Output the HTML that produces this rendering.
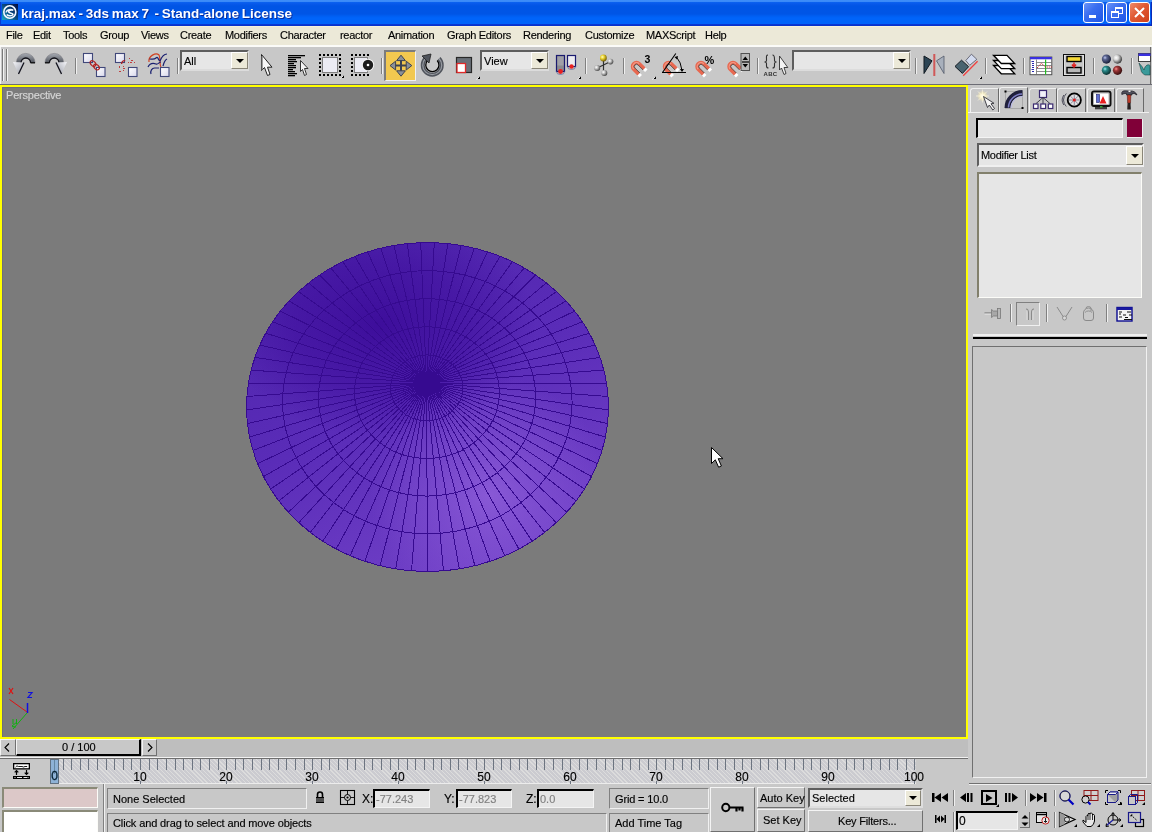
<!DOCTYPE html>
<html><head><meta charset="utf-8">
<style>
*{margin:0;padding:0;box-sizing:border-box}
html,body{width:1152px;height:832px;overflow:hidden;background:#c8c8c8;font-family:"Liberation Sans",sans-serif;font-size:11px;color:#000;position:relative}
.a{position:absolute}
.tx{position:absolute;white-space:pre;line-height:12px;font-size:11px;will-change:transform;-webkit-text-stroke:0.15px currentColor}
.sep{position:absolute;width:2px;border-left:1px solid #808080;border-right:1px solid #f0f0f0}
.sunk{position:absolute;border-top:1px solid #808080;border-left:1px solid #808080;border-bottom:1px solid #f0f0f0;border-right:1px solid #f0f0f0}
.rais{position:absolute;border-top:1px solid #f4f4f4;border-left:1px solid #f4f4f4;border-bottom:1px solid #707070;border-right:1px solid #707070}
.fld{position:absolute;background:#e6e6e6;border-top:2px solid #000;border-left:2px solid #000;border-bottom:1px solid #f4f4f4;border-right:1px solid #f4f4f4}
.dd{position:absolute;background:#e6e6e6;border-top:2px solid #5e5e5e;border-left:2px solid #5e5e5e;border-bottom:2px solid #dcdcdc;border-right:2px solid #dcdcdc}
.ddb{position:absolute;background:#ece9d8;border-top:1px solid #fff;border-left:1px solid #fff;border-bottom:1px solid #8a8678;border-right:1px solid #8a8678}
.ddb i{position:absolute;left:50%;top:50%;margin-left:-4px;margin-top:-2px;width:0;height:0;border-left:4px solid transparent;border-right:4px solid transparent;border-top:4px solid #000}
.fly{position:absolute;width:0;height:0;border-left:3px solid transparent;border-bottom:3px solid #000}
svg{position:absolute;overflow:visible}
</style></head><body>
<!-- TITLE -->
<div class="a" style="left:0;top:0;width:1152px;height:26px;background:linear-gradient(#3d8ef8 0px,#3a8af8 1.5px,#0b63f0 2px,#0758ea 4px,#0055e5 6px,#0055e6 14px,#005ef2 16px,#0064fa 18px,#0064fa 23.5px,#0a3ad8 24px,#0630c8 26px)"></div>
<div class="a" style="left:0;top:2px;width:1px;height:24px;background:#0a3ad0"></div>
<div class="a" style="left:1151px;top:2px;width:1px;height:24px;background:#0a2ab8"></div>
<svg style="left:2px;top:4px" width="16" height="16" viewBox="0 0 16 16">
<defs><linearGradient id="lg" x1="0" y1="1" x2="1" y2="0"><stop offset="0" stop-color="#1aa8c8"/><stop offset="0.5" stop-color="#0a4a80"/><stop offset="1" stop-color="#050a40"/></linearGradient></defs>
<rect x="0" y="0" width="16" height="16" fill="url(#lg)"/>
<ellipse cx="7.8" cy="8" rx="6" ry="6.2" fill="none" stroke="#f4f8ff" stroke-width="1.6"/>
<path d="M4.2 8.5 C4.5 5.5 9 4.8 11.2 6.2 C9 5.8 6 6.5 6.8 8.2 C7.5 9.5 11 8.8 11 10.5 C10 12.5 6 12 4.8 10.5" fill="none" stroke="#f4f8ff" stroke-width="1.5"/>
</svg>
<div class="tx" style="left:21px;top:6px;font-size:13.5px;line-height:15px;font-weight:bold;color:#fff;word-spacing:-1px;-webkit-text-stroke:0;text-shadow:1px 1px 0 #0a2a9a">kraj.max - 3ds max 7  - Stand-alone License</div>
<!-- title buttons -->
<div class="a" style="left:1083px;top:2px;width:21px;height:21px;border:1px solid #fff;border-radius:3px;background:linear-gradient(135deg,#6a94f8 0%,#3a6ef0 40%,#1e56e6 100%)"><div class="a" style="left:5px;top:12px;width:7px;height:3px;background:#fff"></div></div>
<div class="a" style="left:1106px;top:2px;width:21px;height:21px;border:1px solid #fff;border-radius:3px;background:linear-gradient(135deg,#6a94f8 0%,#3a6ef0 40%,#1e56e6 100%)"><div class="a" style="left:8px;top:4px;width:8px;height:7px;border:1px solid #fff;border-top-width:2px"></div><div class="a" style="left:4px;top:8px;width:8px;height:7px;border:1px solid #fff;border-top-width:2px;background:#3a6ef0"></div></div>
<div class="a" style="left:1129px;top:2px;width:21px;height:21px;border:1px solid #fff;border-radius:3px;background:linear-gradient(135deg,#f08a6a 0%,#e05a34 45%,#d0401a 100%)"><svg style="left:4px;top:4px" width="11" height="11"><path d="M1 1L10 10M10 1L1 10" stroke="#fff" stroke-width="2"/></svg></div>
<!-- MENU -->
<div class="a" style="left:0;top:26px;width:1152px;height:19px;background:#ece9d8;border-top:1px solid #f6f2dc"></div>
<div class="a" style="left:0;top:45px;width:1152px;height:2px;background:#fbfbf8"></div>
<div class="tx" style="left:6px;top:29px;letter-spacing:-0.3px">File</div>
<div class="tx" style="left:33px;top:29px;letter-spacing:-0.3px">Edit</div>
<div class="tx" style="left:63px;top:29px;letter-spacing:-0.3px">Tools</div>
<div class="tx" style="left:100px;top:29px;letter-spacing:-0.3px">Group</div>
<div class="tx" style="left:141px;top:29px;letter-spacing:-0.3px">Views</div>
<div class="tx" style="left:180px;top:29px;letter-spacing:-0.3px">Create</div>
<div class="tx" style="left:225px;top:29px;letter-spacing:-0.3px">Modifiers</div>
<div class="tx" style="left:280px;top:29px;letter-spacing:-0.3px">Character</div>
<div class="tx" style="left:340px;top:29px;letter-spacing:-0.3px">reactor</div>
<div class="tx" style="left:388px;top:29px;letter-spacing:-0.3px">Animation</div>
<div class="tx" style="left:447px;top:29px;letter-spacing:-0.3px">Graph Editors</div>
<div class="tx" style="left:523px;top:29px;letter-spacing:-0.3px">Rendering</div>
<div class="tx" style="left:585px;top:29px;letter-spacing:-0.3px">Customize</div>
<div class="tx" style="left:646px;top:29px;letter-spacing:-0.3px">MAXScript</div>
<div class="tx" style="left:705px;top:29px;letter-spacing:-0.3px">Help</div>
<!-- TOOLBAR -->
<div class="a" style="left:0;top:47px;width:1152px;height:37px;background:#c8c8c8"></div>
<div class="a" style="left:0;top:84px;width:1152px;height:1px;background:#6c6c74"></div>
<div class="a" style="left:0;top:47px;width:1px;height:37px;background:#f4f4f4"></div>
<div class="a" style="left:1150px;top:47px;width:1px;height:37px;background:#6c6c6c"></div>
<!-- grip -->
<div class="a" style="left:2px;top:49px;width:1px;height:32px;background:#7a7a7a"></div>
<div class="a" style="left:3px;top:49px;width:1px;height:32px;background:#f4f4f4"></div>
<div class="a" style="left:6px;top:49px;width:1px;height:32px;background:#7a7a7a"></div>
<div class="a" style="left:7px;top:49px;width:1px;height:32px;background:#f4f4f4"></div>
<!-- separators -->
<div class="sep" style="left:75px;top:58px;height:16px"></div>
<div class="sep" style="left:177px;top:58px;height:16px"></div>
<div class="sep" style="left:381px;top:58px;height:16px"></div>
<div class="sep" style="left:585px;top:58px;height:16px"></div>
<div class="sep" style="left:623px;top:58px;height:16px"></div>
<div class="sep" style="left:757px;top:58px;height:16px"></div>
<div class="sep" style="left:915px;top:58px;height:16px"></div>
<div class="sep" style="left:985px;top:58px;height:16px"></div>
<div class="sep" style="left:1023px;top:58px;height:16px"></div>
<div class="sep" style="left:1093px;top:58px;height:16px"></div>
<div class="sep" style="left:1131px;top:58px;height:16px"></div>
<!-- dropdowns -->
<div class="dd" style="left:180px;top:50px;width:69px;height:21px"><div class="tx" style="left:2px;top:3px">All</div><div class="ddb" style="left:49px;top:0px;width:17px;height:17px"><i></i></div></div>
<div class="dd" style="left:480px;top:50px;width:69px;height:21px"><div class="tx" style="left:2px;top:3px">View</div><div class="ddb" style="left:49px;top:0px;width:17px;height:17px"><i></i></div></div>
<div class="dd" style="left:792px;top:50px;width:119px;height:21px"><div class="ddb" style="left:99px;top:0px;width:17px;height:17px"><i></i></div></div>
<!-- move button active -->
<div class="a" style="left:384px;top:50px;width:32px;height:31px;background:#f2c850;border-top:2px solid #7c7c7c;border-left:2px solid #7c7c7c;border-bottom:1px solid #f0f0f0;border-right:1px solid #f0f0f0"></div>
<svg style="left:0;top:0" width="1152" height="90" viewBox="0 0 1152 90">
<defs>
<linearGradient id="gm" x1="0" y1="0" x2="0" y2="1"><stop offset="0" stop-color="#a8acb4"/><stop offset="1" stop-color="#50545c"/></linearGradient>
<linearGradient id="gl" x1="0" y1="0" x2="1" y2="1"><stop offset="0" stop-color="#f4f4f8"/><stop offset="1" stop-color="#9a9ea8"/></linearGradient>
<linearGradient id="gsq" x1="0" y1="0" x2="1" y2="1"><stop offset="0" stop-color="#ffffff"/><stop offset="1" stop-color="#d8d8ec"/></linearGradient>
<radialGradient id="sp1" cx="0.35" cy="0.35" r="0.7"><stop offset="0" stop-color="#c0c8f0"/><stop offset="0.3" stop-color="#5a6490"/><stop offset="1" stop-color="#141830"/></radialGradient>
<radialGradient id="sp2" cx="0.35" cy="0.35" r="0.7"><stop offset="0" stop-color="#ffffff"/><stop offset="0.35" stop-color="#d8d8d8"/><stop offset="1" stop-color="#303030"/></radialGradient>
<radialGradient id="sp3" cx="0.35" cy="0.35" r="0.7"><stop offset="0" stop-color="#a0f0f0"/><stop offset="0.3" stop-color="#2a8a8a"/><stop offset="1" stop-color="#0a2a2a"/></radialGradient>
<radialGradient id="sp4" cx="0.35" cy="0.35" r="0.7"><stop offset="0" stop-color="#ff9090"/><stop offset="0.3" stop-color="#a03838"/><stop offset="1" stop-color="#300a0a"/></radialGradient>
<radialGradient id="spy" cx="0.35" cy="0.35" r="0.7"><stop offset="0" stop-color="#ffffc0"/><stop offset="0.4" stop-color="#e8d030"/><stop offset="1" stop-color="#705a00"/></radialGradient>
<radialGradient id="spg" cx="0.35" cy="0.35" r="0.7"><stop offset="0" stop-color="#ffffff"/><stop offset="0.4" stop-color="#c0c0c0"/><stop offset="1" stop-color="#404040"/></radialGradient>
<g id="mag"><path d="M-3.6 6.5V0A3.6 3.6 0 0 1 3.6 0V6.5" fill="none" stroke="#e86850" stroke-width="3.2"/><path d="M-2 6.5V0A2 2 0 0 1 2 0V6.5" fill="none" stroke="#303030" stroke-width="0.6"/><path d="M-3.5 0A3.5 3.5 0 0 1 3.5 0" fill="none" stroke="#f8b0a0" stroke-width="1" opacity="0.7"/><rect x="-5.2" y="6.5" width="3.2" height="2.5" fill="#fff"/><rect x="2" y="6.5" width="3.2" height="2.5" fill="#fff"/></g>
</defs>
<!-- undo -->
<path d="M16.3 62.8A9.4 9.4 0 0 1 35.1 62.8L30.6 62.8A4.8 4.8 0 0 0 21 62.8Z" fill="url(#gm)" stroke="#707078" stroke-width="0.5"/>
<path d="M21 62.8A4.8 4.8 0 0 1 30.6 62.8" fill="none" stroke="#101018" stroke-width="1.3"/>
<path d="M30.5 62.8H35" stroke="#000" stroke-width="1.2"/>
<path d="M13 62L24 62.5L18.5 74Z" fill="url(#gl)"/>
<path d="M24 62.5L18.5 74" stroke="#10101a" stroke-width="1.3"/>
<!-- redo -->
<g transform="translate(80 0) scale(-1 1)">
<path d="M16.3 62.8A9.4 9.4 0 0 1 35.1 62.8L30.6 62.8A4.8 4.8 0 0 0 21 62.8Z" fill="url(#gm)" stroke="#707078" stroke-width="0.5"/>
<path d="M21 62.8A4.8 4.8 0 0 1 30.6 62.8" fill="none" stroke="#101018" stroke-width="1.3"/>
<path d="M30.5 62.8H35" stroke="#000" stroke-width="1.2"/>
<path d="M13 62L24 62.5L18.5 74Z" fill="url(#gl)"/>
<path d="M24 62.5L18.5 74" stroke="#10101a" stroke-width="1.3"/>
</g>
<!-- link -->
<rect x="83.5" y="53.5" width="9" height="9" fill="url(#gsq)" stroke="#40487a" stroke-width="1.1"/>
<rect x="96.5" y="67.5" width="8.5" height="9" fill="url(#gsq)" stroke="#40487a" stroke-width="1.1"/>
<ellipse cx="93" cy="63.5" rx="2.2" ry="3.3" transform="rotate(-45 93 63.5)" fill="none" stroke="#b02020" stroke-width="1.2"/>
<ellipse cx="96.5" cy="67" rx="2.2" ry="3.3" transform="rotate(-45 96.5 67)" fill="none" stroke="#b02020" stroke-width="1.2"/>
<!-- unlink -->
<rect x="115.5" y="53.5" width="9" height="9" fill="url(#gsq)" stroke="#40487a" stroke-width="1.1"/>
<rect x="128.5" y="67.5" width="8.5" height="9" fill="url(#gsq)" stroke="#40487a" stroke-width="1.1"/>
<path d="M121.5 64C122 61 124 60 125 61" fill="none" stroke="#b02020" stroke-width="1.3"/>
<g fill="#c04040"><rect x="129" y="58" width="1" height="1"/><rect x="131" y="60" width="2" height="1"/><rect x="128" y="62" width="1" height="1"/><rect x="130" y="62" width="2" height="1"/><rect x="134" y="62" width="1" height="1"/><rect x="119" y="66" width="1" height="2"/><rect x="123" y="66" width="1" height="1"/><rect x="123" y="68" width="2" height="1"/><rect x="119" y="71" width="2" height="1"/><rect x="123" y="70" width="1" height="1"/></g>
<!-- bind -->
<path d="M149 62C148 56 156 52 159 55C161 58 159 64 161 67" fill="none" stroke="#d04020" stroke-width="1.2"/>
<path d="M149.5 59C152 59 154 60 156 58C158 56 158 60 160 61M153 55" fill="none" stroke="#1a2070" stroke-width="1.2"/>
<path d="M160 61C162 56 164 54 167 54M148 67C150 63 153 63 156 64C158 65 159 62 161 62M163 66C164 62 165 60 167 59" fill="none" stroke="#1a2070" stroke-width="1.2"/>
<path d="M151 74C150 71 152 68 154.5 68H159" fill="none" stroke="#1a2070" stroke-width="1.2"/>
<rect x="160.5" y="67.5" width="8.5" height="9" fill="url(#gsq)" stroke="#40487a" stroke-width="1.1"/>
<!-- select -->
<path d="M261.5 54.5V70.5L264.5 67.5L267.5 75.5L270 74.5L267.5 67.2H272Z" fill="#f8f8f8" stroke="#202020" stroke-width="1"/>
<path d="M262 56V70" stroke="#707070" stroke-width="1.3"/>
<!-- select by name -->
<g fill="#000"><rect x="288" y="55" width="17" height="1.3"/><rect x="288" y="57" width="13" height="1.3"/><rect x="288" y="59" width="8" height="1.3"/><rect x="288" y="61" width="9" height="1.3"/><rect x="288" y="63" width="6" height="1.3"/><rect x="288" y="65" width="8" height="1.3"/><rect x="288" y="67" width="8" height="1.3"/><rect x="288" y="69" width="5" height="1.3"/><rect x="288" y="71" width="7" height="1.3"/><rect x="288" y="73" width="9" height="1.3"/><rect x="288" y="75" width="7" height="1.3"/></g>
<path d="M300.5 60.5V71.5L302.5 69.5L304.5 75.5L306.5 74.5L304.5 68.5H308Z" fill="#f4f4f4" stroke="#202020" stroke-width="0.9"/>
<!-- region select -->
<g fill="#000"><rect x="319" y="54" width="2" height="2"/><rect x="323" y="54" width="2" height="2"/><rect x="327" y="54" width="2" height="2"/><rect x="331" y="54" width="2" height="2"/><rect x="335" y="54" width="2" height="2"/><rect x="339" y="54" width="2" height="2"/>
<rect x="319" y="74" width="2" height="2"/><rect x="323" y="74" width="2" height="2"/><rect x="327" y="74" width="2" height="2"/><rect x="331" y="74" width="2" height="2"/><rect x="335" y="74" width="2" height="2"/><rect x="339" y="74" width="2" height="2"/>
<rect x="319" y="58" width="2" height="2"/><rect x="319" y="62" width="2" height="2"/><rect x="319" y="66" width="2" height="2"/><rect x="319" y="70" width="2" height="2"/>
<rect x="339" y="58" width="2" height="2"/><rect x="339" y="62" width="2" height="2"/><rect x="339" y="66" width="2" height="2"/><rect x="339" y="70" width="2" height="2"/></g>
<rect x="322.5" y="57.5" width="15" height="15" fill="#ececf4" stroke="#808080"/>
<path d="M341 78L344 75V78Z" fill="#000"/><path d="M340.5 78.5L343.5 75.5" stroke="#fff" stroke-width="0.8"/>
<!-- window/crossing -->
<g fill="#000"><rect x="351" y="54" width="2" height="2"/><rect x="355" y="54" width="2" height="2"/><rect x="359" y="54" width="2" height="2"/><rect x="363" y="54" width="2" height="2"/><rect x="367" y="54" width="2" height="2"/>
<rect x="351" y="74" width="2" height="2"/><rect x="355" y="74" width="2" height="2"/><rect x="359" y="74" width="2" height="2"/><rect x="363" y="74" width="2" height="2"/><rect x="367" y="74" width="2" height="2"/>
<rect x="351" y="58" width="2" height="2"/><rect x="351" y="62" width="2" height="2"/><rect x="351" y="66" width="2" height="2"/><rect x="351" y="70" width="2" height="2"/></g>
<rect x="354.5" y="57.5" width="13" height="15" fill="#ececf4" stroke="#808080"/>
<circle cx="368" cy="65" r="6.2" fill="#f4f4f4"/>
<circle cx="368" cy="65" r="5.2" fill="#1c1c1c"/>
<circle cx="368" cy="65" r="1.3" fill="#fff"/>
<!-- move -->
<path d="M401 60V71.5M395 65.6H407" stroke="#3c4250" stroke-width="2"/>
<path d="M401 55.2L396.6 60.6H405.4Z M401 76.2L396.6 70.8H405.4Z M390 65.6L395.6 61.2V70Z M411.8 65.6L406.2 61.2V70Z" fill="#8a9098" stroke="#3c4250" stroke-width="1"/>
<!-- rotate -->
<path d="M439 58.5A9.5 9.5 0 1 1 425.5 58.5" fill="none" stroke="#50545c" stroke-width="4"/>
<path d="M439 58.5A9.5 9.5 0 1 1 425.5 58.5" fill="none" stroke="#c8ccd0" stroke-width="1.2" opacity="0.6"/>
<path d="M437.2 60.5A6.6 6.6 0 1 1 427.5 60.5" fill="none" stroke="#000" stroke-width="1.3"/>
<path d="M431 54L422 56L429 63Z" fill="#50545c" stroke="#202020" stroke-width="0.8"/>
<!-- scale -->
<rect x="456.5" y="57.5" width="15" height="15" fill="#6a7078" stroke="#282828" stroke-width="1.2"/>
<rect x="457" y="63.5" width="8.5" height="9" fill="#fff" stroke="#e02a2a" stroke-width="1.3"/>
<path d="M477 79L480 76V79Z" fill="#000"/><path d="M476.5 79.5L479.5 76.5" stroke="#fff" stroke-width="0.8"/>
<!-- pivot -->
<rect x="556.5" y="55.5" width="8" height="16" fill="#8a8a90" stroke="#1a1a70" stroke-width="1.2"/>
<rect x="557.5" y="56.5" width="6" height="9" fill="#a0a0a8"/>
<path d="M556.5 71.5A4 3 0 0 0 564.5 71.5" fill="none" stroke="#6a70a0" stroke-width="0.8"/>
<circle cx="560.5" cy="71.5" r="2.4" fill="#e82020"/>
<rect x="567.5" y="55.5" width="8" height="11" fill="#ececf0" stroke="#1a1a70" stroke-width="1.2"/>
<path d="M567.5 66.5A4 3 0 0 0 575.5 66.5" fill="none" stroke="#6a70a0" stroke-width="0.8"/>
<circle cx="571.5" cy="66.5" r="2.2" fill="#e82020"/>
<path d="M578 79L581 76V79Z" fill="#000"/><path d="M577.5 79.5L580.5 76.5" stroke="#fff" stroke-width="0.8"/>
<!-- manipulate -->
<path d="M603.5 58V71M597 68L603.5 65L610.5 61.5" stroke="#303030" stroke-width="1.2"/>
<circle cx="603.4" cy="58" r="3.4" fill="url(#spy)"/>
<circle cx="610.5" cy="61.6" r="2.8" fill="url(#spg)"/>
<circle cx="597.2" cy="68.1" r="3" fill="url(#spg)"/>
<circle cx="604.3" cy="73" r="3" fill="url(#spg)"/>
<!-- snaps -->
<use href="#mag" transform="translate(636.5 66.5) rotate(-45) scale(1.1)"/>
<text x="644.5" y="62.8" font-family="Liberation Sans" font-weight="bold" font-size="10.5" fill="#000">3</text>
<path d="M653 79L656 76V79Z" fill="#000"/><path d="M652.5 79.5L655.5 76.5" stroke="#fff" stroke-width="0.8"/>
<use href="#mag" transform="translate(668.5 66.5) rotate(-45) scale(1.1)"/>
<path d="M662 72.5H686M662.5 72.5L675.8 53.5" stroke="#000" stroke-width="1.1"/>
<path d="M676.5 57Q681 62 682 70.5" fill="none" stroke="#000" stroke-width="1"/>
<path d="M674.5 57L678 56L677 59.5Z M680 69L684 69L682 72Z" fill="#000"/>
<use href="#mag" transform="translate(701 66.5) rotate(-45) scale(1.1)"/>
<text x="704.5" y="63.5" font-family="Liberation Sans" font-weight="bold" font-size="11" fill="#000">%</text>
<use href="#mag" transform="translate(733 66.5) rotate(-45) scale(1.1)"/>
<rect x="741" y="53.5" width="8.5" height="17" fill="#b8b8b8" stroke="#505050" stroke-width="1"/>
<path d="M742 62H749" stroke="#000" stroke-width="1.2"/>
<path d="M742.5 60L745.3 56.5L748 60Z M742.5 64L745.3 67.5L748 64Z" fill="#000"/>
<!-- named sel -->
<path d="M768 55C766 55 766.5 57 766.5 59V60.5C766.5 61.5 765.5 62 764.5 62C765.5 62 766.5 62.5 766.5 63.5V66C766.5 67.5 767 68 768.5 68" fill="none" stroke="#303030" stroke-width="1.1"/>
<path d="M772.5 55C774.5 55 774.5 57 774.5 59V60.5C774.5 61.5 775.5 62 776.5 62C775.5 62 774.5 62.5 774.5 63.5V66C774.5 67.5 774 68 772.5 68" fill="none" stroke="#303030" stroke-width="1.1"/>
<text x="763.5" y="75.8" font-family="Liberation Sans" font-weight="bold" font-size="6" fill="#303030" letter-spacing="0.3">ABC</text>
<path d="M779.5 56V70L781.5 68L784 74.5L786 73.5L784 67.5H787.8Z" fill="#f4f4f4" stroke="#303030" stroke-width="0.9"/>
<!-- mirror -->
<path d="M924 56V73.5L932 60.8Z" fill="#2c4454" stroke="#101820" stroke-width="1"/>
<rect x="933.3" y="54" width="2" height="22" fill="#d05858"/>
<path d="M944 56V73.5L936.5 60.8Z" fill="#a8b0bc" stroke="#505868" stroke-width="0.8"/>
<!-- align -->
<path d="M955 66.4L961.5 60.2L968.6 66.7L962.4 73.4Z" fill="#4a6470" stroke="#101820" stroke-width="1"/>
<path d="M965.8 60.5L971.4 54.2L976.8 59.3L969.7 65.3Z" fill="#d4dcf0" stroke="#505060" stroke-width="0.8"/>
<path d="M963.2 75.7L977.6 61.3" stroke="#f04040" stroke-width="1.3"/>
<path d="M979 79L982 76V79Z" fill="#000"/><path d="M978.5 79.5L981.5 76.5" stroke="#fff" stroke-width="0.8"/>
<!-- layers -->
<path d="M993.5 65.5H1007L1014.7 73.8H1001.3Z" fill="#fff" stroke="#000" stroke-width="1.3"/>
<path d="M993.5 60.5H1007L1014.7 68.7H1001.3Z" fill="#fff" stroke="#000" stroke-width="1.3"/>
<path d="M993.5 55.3H1007L1014.7 63.5H1001.3Z" fill="#fff" stroke="#000" stroke-width="1.3"/>
<!-- curve editor -->
<rect x="1030" y="57" width="21.8" height="17.7" fill="#fff" stroke="#505050" stroke-width="1"/>
<rect x="1030" y="57" width="21.8" height="2.3" fill="#3a30e0"/>
<path d="M1036.5 59.5V74.5M1036.5 62.5H1052M1036.5 65.5H1052M1036.5 68.5H1052M1036.5 71.5H1052" stroke="#707070" stroke-width="0.8"/>
<g fill="#2a2ab0"><rect x="1031.5" y="61" width="2.5" height="1"/><rect x="1032" y="63" width="2" height="1"/><rect x="1032" y="65" width="2" height="1"/><rect x="1032" y="67" width="2" height="1"/><rect x="1031.5" y="69" width="2.5" height="1"/><rect x="1032" y="71" width="2" height="1"/></g>
<path d="M1045.6 59.5V74.5" stroke="#20c020" stroke-width="1.2"/>
<path d="M1037 68C1039 66 1040 65 1041.5 63C1043 65 1044 66 1045.5 67H1052" fill="none" stroke="#c02020" stroke-width="0.9" stroke-dasharray="1.2 0.8"/>
<!-- schematic -->
<rect x="1063.5" y="54.5" width="21" height="21" fill="#c8c8c8" stroke="#101010" stroke-width="1"/>
<rect x="1064.5" y="55.5" width="19" height="19" fill="none" stroke="#f0f0f0" stroke-width="0.6"/>
<rect x="1067" y="56.5" width="14" height="5" fill="#f4d838" stroke="#000" stroke-width="1.4"/>
<rect x="1067" y="67.5" width="14" height="5.5" fill="#b8b8b8" stroke="#000" stroke-width="1.4"/>
<path d="M1074 62.5V67M1072 64.5L1074 67L1076 64.5" stroke="#e02020" stroke-width="1.5" fill="none"/>
<!-- material -->
<circle cx="1106.4" cy="59.1" r="4.6" fill="url(#sp1)"/>
<circle cx="1117.5" cy="59.1" r="4.6" fill="url(#sp2)"/>
<circle cx="1106.4" cy="70.3" r="4.6" fill="url(#sp3)"/>
<circle cx="1117.5" cy="70.3" r="4.6" fill="url(#sp4)"/>
<!-- render -->
<rect x="1138.5" y="53.5" width="12" height="8" fill="#fff" stroke="#404040" stroke-width="1"/>
<rect x="1138.5" y="53.5" width="12" height="2.5" fill="#3a30e0"/>
<path d="M1139 63L1142 66.5L1144 70C1145 64 1150 64 1150 66V75H1145C1143 74 1141 72 1141 70Z" fill="#3a9a9a" stroke="#0a3030" stroke-width="0.5"/>
</svg>
<!-- VIEWPORT -->
<div class="a" style="left:0;top:85px;width:968px;height:654px;background:#ffff00"></div>
<div class="a" style="left:2px;top:87px;width:964px;height:650px;background:#7b7b7b;border-top:1px solid #6e6e78;border-left:1px solid #6e6e78"></div>
<div class="tx" style="left:6px;top:89px;color:#d6d6d6;letter-spacing:-0.2px">Perspective</div>
<svg style="left:0;top:0" width="1152" height="832" viewBox="0 0 1152 832">
<defs>
<linearGradient id="dg" gradientUnits="userSpaceOnUse" x1="350" y1="250" x2="500" y2="575"><stop offset="0" stop-color="#5026ae"/><stop offset="0.45" stop-color="#5a2cb8"/><stop offset="1" stop-color="#7242c8"/></linearGradient>
<radialGradient id="dc" gradientUnits="userSpaceOnUse" cx="380" cy="325" r="125" gradientTransform="translate(380 325) scale(1.25 0.9) translate(-380 -325)"><stop offset="0" stop-color="#3c0c9a" stop-opacity="0.95"/><stop offset="0.55" stop-color="#3e0e9c" stop-opacity="0.6"/><stop offset="1" stop-color="#3e0e9c" stop-opacity="0"/></radialGradient>
<radialGradient id="dh" gradientUnits="userSpaceOnUse" cx="490" cy="495" r="120"><stop offset="0" stop-color="#8c5cd8" stop-opacity="0.9"/><stop offset="0.6" stop-color="#8454d4" stop-opacity="0.45"/><stop offset="1" stop-color="#8454d4" stop-opacity="0"/></radialGradient>
</defs>
<ellipse cx="427.5" cy="407.0" rx="181.0" ry="164.5" fill="url(#dg)"/>
<ellipse cx="427.5" cy="407.0" rx="181.0" ry="164.5" fill="url(#dc)"/>
<ellipse cx="427.5" cy="407.0" rx="181.0" ry="164.5" fill="url(#dh)"/>
<path d="M426.5 383.0L427.5 571.5M426.5 383.0L411.5 570.9M426.5 383.0L395.7 568.9M426.5 383.0L380.1 565.8M426.5 383.0L364.9 561.3M426.5 383.0L350.2 555.7M426.5 383.0L336.1 549.0M426.5 383.0L322.8 541.2M426.5 383.0L310.4 532.4M426.5 383.0L298.8 522.7M426.5 383.0L288.3 512.2M426.5 383.0L278.9 500.9M426.5 383.0L270.6 489.0M426.5 383.0L263.5 476.6M426.5 383.0L257.6 463.7M426.5 383.0L253.0 450.5M426.5 383.0L249.6 437.1M426.5 383.0L247.4 423.6M426.5 383.0L246.5 410.0M426.5 383.0L246.9 396.5M426.5 383.0L248.4 383.2M426.5 383.0L251.1 370.1M426.5 383.0L254.9 357.4M426.5 383.0L259.8 345.1M426.5 383.0L265.7 333.2M426.5 383.0L272.6 321.8M426.5 383.0L280.4 311.1M426.5 383.0L289.1 301.0M426.5 383.0L298.5 291.6M426.5 383.0L308.6 282.9M426.5 383.0L319.4 275.0M426.5 383.0L330.8 268.0M426.5 383.0L342.7 261.7M426.5 383.0L355.0 256.3M426.5 383.0L367.6 251.8M426.5 383.0L380.6 248.1M426.5 383.0L393.9 245.4M426.5 383.0L407.2 243.5M426.5 383.0L420.7 242.6M426.5 383.0L434.3 242.6M426.5 383.0L447.8 243.5M426.5 383.0L461.1 245.4M426.5 383.0L474.4 248.1M426.5 383.0L487.4 251.8M426.5 383.0L500.0 256.3M426.5 383.0L512.3 261.7M426.5 383.0L524.2 268.0M426.5 383.0L535.6 275.0M426.5 383.0L546.4 282.9M426.5 383.0L556.5 291.6M426.5 383.0L565.9 301.0M426.5 383.0L574.6 311.1M426.5 383.0L582.4 321.8M426.5 383.0L589.3 333.2M426.5 383.0L595.2 345.1M426.5 383.0L600.1 357.4M426.5 383.0L603.9 370.1M426.5 383.0L606.6 383.2M426.5 383.0L608.1 396.5M426.5 383.0L608.5 410.0M426.5 383.0L607.6 423.6M426.5 383.0L605.4 437.1M426.5 383.0L602.0 450.5M426.5 383.0L597.4 463.7M426.5 383.0L591.5 476.6M426.5 383.0L584.4 489.0M426.5 383.0L576.1 500.9M426.5 383.0L566.7 512.2M426.5 383.0L556.2 522.7M426.5 383.0L544.6 532.4M426.5 383.0L532.2 541.2M426.5 383.0L518.9 549.0M426.5 383.0L504.8 555.7M426.5 383.0L490.1 561.3M426.5 383.0L474.9 565.8M426.5 383.0L459.3 568.9M426.5 383.0L443.5 570.9" stroke="#360a90" stroke-width="1" fill="none" shape-rendering="crispEdges"/>
<ellipse cx="426.7" cy="387.8" rx="36.2" ry="32.9" stroke="#360a90" stroke-width="1" fill="none" shape-rendering="crispEdges"/>
<ellipse cx="426.9" cy="392.6" rx="72.4" ry="65.8" stroke="#360a90" stroke-width="1" fill="none" shape-rendering="crispEdges"/>
<ellipse cx="427.1" cy="397.4" rx="108.6" ry="98.7" stroke="#360a90" stroke-width="1" fill="none" shape-rendering="crispEdges"/>
<ellipse cx="427.3" cy="402.2" rx="144.8" ry="131.6" stroke="#360a90" stroke-width="1" fill="none" shape-rendering="crispEdges"/>
<ellipse cx="427.5" cy="407.0" rx="181.0" ry="164.5" stroke="#360a90" stroke-width="1" fill="none" shape-rendering="crispEdges"/>
</svg>
<!-- axis tripod -->
<svg style="left:0;top:680px" width="50" height="60" viewBox="0 0 50 60">
<path d="M9.5 19.5L27 32" stroke="#e01010" stroke-width="1"/>
<path d="M27.5 23V33" stroke="#1010e0" stroke-width="1.5"/>
<path d="M27 33L13 49" stroke="#10b010" stroke-width="1"/>
<path d="M9 8L13 14M13 8L9 14" stroke="#e01010" stroke-width="1.2"/>
<path d="M28 12.5H32L28 17.5H32" stroke="#1010e0" stroke-width="1.2" fill="none"/>
<path d="M13 39V44M16.5 39V44M12 46L17 42M12 46.5L16 47" stroke="#10b010" stroke-width="1" fill="none"/>
</svg>
<!-- cursor -->
<svg style="left:711px;top:447px" width="14" height="22" viewBox="0 0 14 22"><path d="M0.5 0.5V16.5L4.3 12.8L7.6 20.2L10.4 19L7.2 11.7H12Z" fill="#fff" stroke="#000" stroke-width="1"/></svg>
<!-- COMMAND PANEL -->
<div class="a" style="left:968px;top:112px;width:31px;height:1px;background:#f0f0f0"></div>
<div class="a" style="left:1028px;top:112px;width:121px;height:1px;background:#f0f0f0"></div>
<div class="a" style="left:970px;top:88px;width:29px;height:24px;border-top:1px solid #f0f0f0;border-left:1px solid #f0f0f0;border-right:1px solid #6a6a6a;border-top-left-radius:3px"></div>
<div class="a" style="left:999px;top:87px;width:29px;height:26px;border-top:1px solid #f0f0f0;border-left:1px solid #f0f0f0;border-right:1px solid #6a6a6a;border-top-left-radius:3px"></div>
<div class="a" style="left:1029px;top:88px;width:28px;height:24px;border-top:1px solid #f0f0f0;border-left:1px solid #f0f0f0;border-right:1px solid #6a6a6a;border-top-left-radius:3px"></div>
<div class="a" style="left:1057px;top:88px;width:29px;height:24px;border-top:1px solid #f0f0f0;border-left:1px solid #f0f0f0;border-right:1px solid #6a6a6a;border-top-left-radius:3px"></div>
<div class="a" style="left:1087px;top:88px;width:28px;height:24px;border-top:1px solid #f0f0f0;border-left:1px solid #f0f0f0;border-right:1px solid #6a6a6a;border-top-left-radius:3px"></div>
<div class="a" style="left:1116px;top:88px;width:28px;height:24px;border-top:1px solid #f0f0f0;border-left:1px solid #f0f0f0;border-right:1px solid #6a6a6a;border-top-left-radius:3px"></div>
<!-- name field & color -->
<div class="fld" style="left:976px;top:118px;width:147px;height:20px"></div>
<div class="a" style="left:1127px;top:119px;width:16px;height:19px;background:#800038;border-right:1px solid #f0f0f0;border-bottom:1px solid #f0f0f0"></div>
<!-- modifier list -->
<div class="dd" style="left:977px;top:143px;width:167px;height:24px;border-bottom-color:#f0f0f0;border-right-color:#f0f0f0"><div class="tx" style="left:2px;top:4px;letter-spacing:-0.3px">Modifier List</div><div class="ddb" style="left:147px;top:1px;width:17px;height:19px"><i></i></div></div>
<!-- stack -->
<div class="a" style="left:977px;top:172px;width:165px;height:126px;background:#e6e6e6;border-top:2px solid #82806c;border-left:2px solid #82806c;border-bottom:1px solid #fcfcf8;border-right:1px solid #fcfcf8"></div>
<!-- stack buttons -->
<div class="sep" style="left:1010px;top:304px;height:18px"></div>
<div class="sunk" style="left:1016px;top:302px;width:24px;height:24px"></div>
<div class="sep" style="left:1046px;top:304px;height:18px"></div>
<div class="sep" style="left:1106px;top:304px;height:18px"></div>
<div class="a" style="left:973px;top:334px;width:174px;height:2px;background:#f0f0f0"></div>
<div class="a" style="left:973px;top:337px;width:174px;height:2px;background:#000"></div>
<div class="a" style="left:972px;top:346px;width:175px;height:432px;border-top:1px solid #707070;border-left:1px solid #707070;border-bottom:1px solid #f0f0f0;border-right:1px solid #f0f0f0"></div>
<div class="a" style="left:969px;top:783px;width:182px;height:1px;background:#707070"></div>
<div class="a" style="left:969px;top:784px;width:182px;height:1px;background:#f0f0f0"></div>
<svg style="left:960px;top:84px" width="192" height="250" viewBox="960 84 192 250">
<defs>
<radialGradient id="star" cx="0.5" cy="0.5" r="0.5"><stop offset="0" stop-color="#ffffff"/><stop offset="0.4" stop-color="#f8f0c8"/><stop offset="1" stop-color="#f0e0a0" stop-opacity="0"/></radialGradient>
<linearGradient id="tube" x1="0" y1="1" x2="1" y2="0"><stop offset="0" stop-color="#20203a"/><stop offset="0.5" stop-color="#7070b0"/><stop offset="1" stop-color="#303050"/></linearGradient>
</defs>
<!-- create -->
<circle cx="982.4" cy="96" r="5.5" fill="url(#star)"/>
<path d="M982.4 89.5V102.5M976 96H989M978 91.5L987 100.5M987 91.5L978 100.5" stroke="#fffae0" stroke-width="0.8" opacity="0.8"/>
<path d="M983.5 96.5L987.5 107.5L989.3 105L992.8 110L994.5 108.5L991 103.8L994 103.3Z" fill="#f4f4f4" stroke="#303038" stroke-width="0.9"/>
<!-- modify -->
<path d="M1005.5 91.5V108.5H1022.5M1005.5 91.5H1022.5V108.5" fill="none" stroke="#606060" stroke-width="0.6" stroke-dasharray="1 1"/>
<rect x="1004.5" y="90.5" width="2" height="2" fill="#000"/><rect x="1021.5" y="107" width="2" height="2" fill="#000"/>
<path d="M1007.5 108A15 15 0 0 1 1022.5 93" fill="none" stroke="#20203c" stroke-width="6"/>
<path d="M1008.5 107.5A14 14 0 0 1 1022 94" fill="none" stroke="#8080c8" stroke-width="1.5"/>
<path d="M1011 108A11.5 11.5 0 0 1 1022.5 96.5" fill="none" stroke="#b8b8e8" stroke-width="1"/>
<!-- hierarchy -->
<rect x="1039.5" y="90.5" width="7" height="7" fill="#f0f0f8" stroke="#3a2a70" stroke-width="1.2"/>
<path d="M1043 97.5L1035.5 104M1043 97.5V104M1043 97.5L1050.5 104" stroke="#303040" stroke-width="0.9"/>
<rect x="1033.5" y="104" width="4.5" height="4.5" fill="#fff" stroke="#3a2a70" stroke-width="1.2"/>
<rect x="1040.8" y="104" width="4.8" height="4.5" fill="#fff" stroke="#3a2a70" stroke-width="1.2"/>
<rect x="1048.3" y="104" width="4.5" height="4.5" fill="#fff" stroke="#3a2a70" stroke-width="1.2"/>
<!-- motion -->
<circle cx="1074.3" cy="100" r="6.6" fill="#e0e0e0" stroke="#000" stroke-width="1.8"/>
<path d="M1074.3 94.5V105.5M1069 100H1079.5M1070.5 96.2L1078 103.8M1078 96.2L1070.5 103.8" stroke="#505070" stroke-width="0.6"/>
<circle cx="1074.3" cy="100" r="1.6" fill="#e02020"/>
<path d="M1066.3 93.5A9 9 0 0 0 1066.3 106.5M1063.8 95A9 9 0 0 0 1063.8 105" fill="none" stroke="#303040" stroke-width="0.8"/>
<!-- display -->
<rect x="1092" y="91.5" width="18.5" height="14.5" rx="2" fill="#fff" stroke="#101010" stroke-width="2"/>
<rect x="1093.5" y="93" width="15.5" height="11.5" fill="none" stroke="#808080" stroke-width="0.6"/>
<rect x="1096.5" y="94.5" width="3" height="8" fill="#6070d0" stroke="#202070" stroke-width="0.6"/>
<path d="M1099.5 103.5L1103 96L1106.5 103.5Z" fill="#e82020"/>
<rect x="1095" y="107" width="12" height="2.3" fill="#404040"/><rect x="1100" y="106.2" width="2.5" height="1.2" fill="#30c030"/>
<!-- utilities -->
<path d="M1121.8 92.5Q1122.5 90.5 1125 90.8L1130 91Q1135 90.5 1137 95Q1134.5 93 1132 93.5V95H1126.5V93.5Q1124 93.2 1121.8 94.5Z" fill="#50505c" stroke="#181820" stroke-width="0.7"/>
<rect x="1128.5" y="90.5" width="2" height="1.5" fill="#f0f0f0"/>
<path d="M1127.3 95H1130.8L1130.5 103H1127.6Z" fill="#d83a20" stroke="#301010" stroke-width="0.5"/>
<path d="M1127.6 103H1130.5L1130.8 109.5H1127.3Z" fill="#181818"/>
<path d="M1128.9 96V109" stroke="#6a4040" stroke-width="0.5"/>
<!-- stack icons -->
<path d="M984.5 313H991.5" stroke="#808080" stroke-width="1.3"/><path d="M984.5 314H991.5" stroke="#f8f8f8" stroke-width="0.7"/>
<path d="M991.5 309.5V317.5L993.5 316H997.5V311H993.5Z" fill="#a8a8a8" stroke="#787878" stroke-width="0.8"/>
<rect x="997.5" y="308.5" width="3" height="10" fill="#b8b8b8" stroke="#787878" stroke-width="0.8"/>
<path d="M1026 309C1028 309 1028.5 311 1028.5 313V320M1034 309C1032 309 1031.5 311 1031.5 313V320" fill="none" stroke="#8a8a8a" stroke-width="1.1"/>
<path d="M1027 310.5V320M1033 310.5V320" stroke="#f0f0f0" stroke-width="0.5"/>
<path d="M1057 307L1064 318M1072 307L1065 318" stroke="#8a8a8a" stroke-width="1"/>
<circle cx="1064.5" cy="318" r="2" fill="#d8d8d8" stroke="#8a8a8a" stroke-width="0.9"/>
<path d="M1083.5 313A5 5 0 0 1 1093.5 313V318A2.5 2.5 0 0 1 1091 320.5H1086A2.5 2.5 0 0 1 1083.5 318Z" fill="none" stroke="#8a8a8a" stroke-width="1"/>
<path d="M1085 312.5A4 3 0 0 1 1092 312.5M1086 308.5A2.5 2 0 0 1 1091 308.5V311" fill="none" stroke="#8a8a8a" stroke-width="0.9"/>
<rect x="1117" y="307.5" width="15" height="13.5" fill="#f4f4f4" stroke="#0a0a90" stroke-width="1.4"/>
<rect x="1117" y="307.5" width="15" height="2.5" fill="#1a1aa0"/>
<path d="M1119 312H1122M1119 314H1121M1123 315H1126M1119 317H1122M1125 317.5H1128M1127 312H1131M1124 319.5H1132M1129 315H1132" stroke="#101010" stroke-width="1.1"/>
</svg>
<!-- TIME SLIDER -->
<div class="a" style="left:0;top:739px;width:968px;height:18px;background:#bebebe"></div>
<div class="a" style="left:0;top:757px;width:968px;height:1px;background:#f2f2f2"></div>
<div class="a" style="left:0;top:758px;width:968px;height:1px;background:#6e6e6e"></div>
<div class="rais" style="left:0;top:739px;width:16px;height:17px;background:#c8c8c8"></div>
<svg style="left:4px;top:743px" width="6" height="9"><path d="M5 0.5L1 4.5L5 8.5" stroke="#000" fill="none" stroke-width="1.1"/></svg>
<div class="a" style="left:16px;top:739px;width:125px;height:17px;background:#c8c8c8;border-top:1px solid #f4f4f4;border-left:1px solid #f4f4f4;border-right:2px solid #000;border-bottom:2px solid #000"></div>
<div class="tx" style="left:62px;top:741px">0 / 100</div>
<div class="rais" style="left:142px;top:739px;width:15px;height:17px;background:#c8c8c8"></div>
<svg style="left:147px;top:743px" width="6" height="9"><path d="M1 0.5L5 4.5L1 8.5" stroke="#000" fill="none" stroke-width="1.1"/></svg>
<!-- TRACK BAR -->
<div class="a" style="left:50px;top:759px;width:866px;height:24px;background:#d4d4d8;background-image:repeating-linear-gradient(45deg,#dcdcdc 0px,#dcdcdc 1px,#cbcbd0 1px,#cbcbd0 3px)"></div>
<div class="a" style="left:50px;top:783px;width:866px;height:1px;background:#ececec"></div>
<svg style="left:13px;top:763px" width="17" height="16" viewBox="0 0 17 16">
<rect x="0.65" y="0.65" width="15.7" height="5.2" fill="#fff" stroke="#000" stroke-width="1.3"/>
<path d="M2.5 4.2Q3.8 2 5.5 3.5H9Q10.5 4.5 12 3.5H14.2" stroke="#000" fill="none" stroke-width="0.9"/>
<path d="M3.5 12V7.6M1.7 9.4L3.5 7.6L5.3 9.4M13.5 7V11.4M11.7 9.6L13.5 11.4L15.3 9.6" stroke="#000" fill="none" stroke-width="1.2"/>
<rect x="0" y="13" width="17" height="3" fill="#000"/>
<path d="M1.5 14.5H2.5M4 14.5H9M10.5 14.5H14.5M15.5 14.5H16" stroke="#fff" stroke-width="0.9"/>
</svg>

<div class="a" style="left:63px;top:759px;width:1px;height:11px;background:#6c7480"></div>
<div class="a" style="left:71px;top:759px;width:1px;height:11px;background:#6c7480"></div>
<div class="a" style="left:80px;top:759px;width:1px;height:11px;background:#6c7480"></div>
<div class="a" style="left:88px;top:759px;width:1px;height:11px;background:#6c7480"></div>
<div class="a" style="left:97px;top:759px;width:1px;height:11px;background:#6c7480"></div>
<div class="a" style="left:106px;top:759px;width:1px;height:11px;background:#6c7480"></div>
<div class="a" style="left:114px;top:759px;width:1px;height:11px;background:#6c7480"></div>
<div class="a" style="left:123px;top:759px;width:1px;height:11px;background:#6c7480"></div>
<div class="a" style="left:131px;top:759px;width:1px;height:11px;background:#6c7480"></div>
<div class="a" style="left:140px;top:759px;width:1px;height:11px;background:#6c7480"></div><div class="a" style="left:140px;top:781px;width:1px;height:3px;background:#6c7480"></div>
<div class="a" style="left:149px;top:759px;width:1px;height:11px;background:#6c7480"></div>
<div class="a" style="left:157px;top:759px;width:1px;height:11px;background:#6c7480"></div>
<div class="a" style="left:166px;top:759px;width:1px;height:11px;background:#6c7480"></div>
<div class="a" style="left:175px;top:759px;width:1px;height:11px;background:#6c7480"></div>
<div class="a" style="left:183px;top:759px;width:1px;height:11px;background:#6c7480"></div>
<div class="a" style="left:192px;top:759px;width:1px;height:11px;background:#6c7480"></div>
<div class="a" style="left:200px;top:759px;width:1px;height:11px;background:#6c7480"></div>
<div class="a" style="left:209px;top:759px;width:1px;height:11px;background:#6c7480"></div>
<div class="a" style="left:218px;top:759px;width:1px;height:11px;background:#6c7480"></div>
<div class="a" style="left:226px;top:759px;width:1px;height:11px;background:#6c7480"></div><div class="a" style="left:226px;top:781px;width:1px;height:3px;background:#6c7480"></div>
<div class="a" style="left:235px;top:759px;width:1px;height:11px;background:#6c7480"></div>
<div class="a" style="left:243px;top:759px;width:1px;height:11px;background:#6c7480"></div>
<div class="a" style="left:252px;top:759px;width:1px;height:11px;background:#6c7480"></div>
<div class="a" style="left:261px;top:759px;width:1px;height:11px;background:#6c7480"></div>
<div class="a" style="left:269px;top:759px;width:1px;height:11px;background:#6c7480"></div>
<div class="a" style="left:278px;top:759px;width:1px;height:11px;background:#6c7480"></div>
<div class="a" style="left:286px;top:759px;width:1px;height:11px;background:#6c7480"></div>
<div class="a" style="left:295px;top:759px;width:1px;height:11px;background:#6c7480"></div>
<div class="a" style="left:304px;top:759px;width:1px;height:11px;background:#6c7480"></div>
<div class="a" style="left:312px;top:759px;width:1px;height:11px;background:#6c7480"></div><div class="a" style="left:312px;top:781px;width:1px;height:3px;background:#6c7480"></div>
<div class="a" style="left:321px;top:759px;width:1px;height:11px;background:#6c7480"></div>
<div class="a" style="left:329px;top:759px;width:1px;height:11px;background:#6c7480"></div>
<div class="a" style="left:338px;top:759px;width:1px;height:11px;background:#6c7480"></div>
<div class="a" style="left:347px;top:759px;width:1px;height:11px;background:#6c7480"></div>
<div class="a" style="left:355px;top:759px;width:1px;height:11px;background:#6c7480"></div>
<div class="a" style="left:364px;top:759px;width:1px;height:11px;background:#6c7480"></div>
<div class="a" style="left:372px;top:759px;width:1px;height:11px;background:#6c7480"></div>
<div class="a" style="left:381px;top:759px;width:1px;height:11px;background:#6c7480"></div>
<div class="a" style="left:390px;top:759px;width:1px;height:11px;background:#6c7480"></div>
<div class="a" style="left:398px;top:759px;width:1px;height:11px;background:#6c7480"></div><div class="a" style="left:398px;top:781px;width:1px;height:3px;background:#6c7480"></div>
<div class="a" style="left:407px;top:759px;width:1px;height:11px;background:#6c7480"></div>
<div class="a" style="left:415px;top:759px;width:1px;height:11px;background:#6c7480"></div>
<div class="a" style="left:424px;top:759px;width:1px;height:11px;background:#6c7480"></div>
<div class="a" style="left:433px;top:759px;width:1px;height:11px;background:#6c7480"></div>
<div class="a" style="left:441px;top:759px;width:1px;height:11px;background:#6c7480"></div>
<div class="a" style="left:450px;top:759px;width:1px;height:11px;background:#6c7480"></div>
<div class="a" style="left:458px;top:759px;width:1px;height:11px;background:#6c7480"></div>
<div class="a" style="left:467px;top:759px;width:1px;height:11px;background:#6c7480"></div>
<div class="a" style="left:476px;top:759px;width:1px;height:11px;background:#6c7480"></div>
<div class="a" style="left:484px;top:759px;width:1px;height:11px;background:#6c7480"></div><div class="a" style="left:484px;top:781px;width:1px;height:3px;background:#6c7480"></div>
<div class="a" style="left:493px;top:759px;width:1px;height:11px;background:#6c7480"></div>
<div class="a" style="left:501px;top:759px;width:1px;height:11px;background:#6c7480"></div>
<div class="a" style="left:510px;top:759px;width:1px;height:11px;background:#6c7480"></div>
<div class="a" style="left:519px;top:759px;width:1px;height:11px;background:#6c7480"></div>
<div class="a" style="left:527px;top:759px;width:1px;height:11px;background:#6c7480"></div>
<div class="a" style="left:536px;top:759px;width:1px;height:11px;background:#6c7480"></div>
<div class="a" style="left:544px;top:759px;width:1px;height:11px;background:#6c7480"></div>
<div class="a" style="left:553px;top:759px;width:1px;height:11px;background:#6c7480"></div>
<div class="a" style="left:562px;top:759px;width:1px;height:11px;background:#6c7480"></div>
<div class="a" style="left:570px;top:759px;width:1px;height:11px;background:#6c7480"></div><div class="a" style="left:570px;top:781px;width:1px;height:3px;background:#6c7480"></div>
<div class="a" style="left:579px;top:759px;width:1px;height:11px;background:#6c7480"></div>
<div class="a" style="left:587px;top:759px;width:1px;height:11px;background:#6c7480"></div>
<div class="a" style="left:596px;top:759px;width:1px;height:11px;background:#6c7480"></div>
<div class="a" style="left:605px;top:759px;width:1px;height:11px;background:#6c7480"></div>
<div class="a" style="left:613px;top:759px;width:1px;height:11px;background:#6c7480"></div>
<div class="a" style="left:622px;top:759px;width:1px;height:11px;background:#6c7480"></div>
<div class="a" style="left:630px;top:759px;width:1px;height:11px;background:#6c7480"></div>
<div class="a" style="left:639px;top:759px;width:1px;height:11px;background:#6c7480"></div>
<div class="a" style="left:648px;top:759px;width:1px;height:11px;background:#6c7480"></div>
<div class="a" style="left:656px;top:759px;width:1px;height:11px;background:#6c7480"></div><div class="a" style="left:656px;top:781px;width:1px;height:3px;background:#6c7480"></div>
<div class="a" style="left:665px;top:759px;width:1px;height:11px;background:#6c7480"></div>
<div class="a" style="left:673px;top:759px;width:1px;height:11px;background:#6c7480"></div>
<div class="a" style="left:682px;top:759px;width:1px;height:11px;background:#6c7480"></div>
<div class="a" style="left:691px;top:759px;width:1px;height:11px;background:#6c7480"></div>
<div class="a" style="left:699px;top:759px;width:1px;height:11px;background:#6c7480"></div>
<div class="a" style="left:708px;top:759px;width:1px;height:11px;background:#6c7480"></div>
<div class="a" style="left:717px;top:759px;width:1px;height:11px;background:#6c7480"></div>
<div class="a" style="left:725px;top:759px;width:1px;height:11px;background:#6c7480"></div>
<div class="a" style="left:734px;top:759px;width:1px;height:11px;background:#6c7480"></div>
<div class="a" style="left:742px;top:759px;width:1px;height:11px;background:#6c7480"></div><div class="a" style="left:742px;top:781px;width:1px;height:3px;background:#6c7480"></div>
<div class="a" style="left:751px;top:759px;width:1px;height:11px;background:#6c7480"></div>
<div class="a" style="left:760px;top:759px;width:1px;height:11px;background:#6c7480"></div>
<div class="a" style="left:768px;top:759px;width:1px;height:11px;background:#6c7480"></div>
<div class="a" style="left:777px;top:759px;width:1px;height:11px;background:#6c7480"></div>
<div class="a" style="left:785px;top:759px;width:1px;height:11px;background:#6c7480"></div>
<div class="a" style="left:794px;top:759px;width:1px;height:11px;background:#6c7480"></div>
<div class="a" style="left:803px;top:759px;width:1px;height:11px;background:#6c7480"></div>
<div class="a" style="left:811px;top:759px;width:1px;height:11px;background:#6c7480"></div>
<div class="a" style="left:820px;top:759px;width:1px;height:11px;background:#6c7480"></div>
<div class="a" style="left:828px;top:759px;width:1px;height:11px;background:#6c7480"></div><div class="a" style="left:828px;top:781px;width:1px;height:3px;background:#6c7480"></div>
<div class="a" style="left:837px;top:759px;width:1px;height:11px;background:#6c7480"></div>
<div class="a" style="left:846px;top:759px;width:1px;height:11px;background:#6c7480"></div>
<div class="a" style="left:854px;top:759px;width:1px;height:11px;background:#6c7480"></div>
<div class="a" style="left:863px;top:759px;width:1px;height:11px;background:#6c7480"></div>
<div class="a" style="left:871px;top:759px;width:1px;height:11px;background:#6c7480"></div>
<div class="a" style="left:880px;top:759px;width:1px;height:11px;background:#6c7480"></div>
<div class="a" style="left:889px;top:759px;width:1px;height:11px;background:#6c7480"></div>
<div class="a" style="left:897px;top:759px;width:1px;height:11px;background:#6c7480"></div>
<div class="a" style="left:906px;top:759px;width:1px;height:11px;background:#6c7480"></div>
<div class="a" style="left:914px;top:759px;width:1px;height:11px;background:#6c7480"></div><div class="a" style="left:914px;top:781px;width:1px;height:3px;background:#6c7480"></div>
<div class="tx" style="left:110px;width:60px;text-align:center;top:771px;font-size:12px;line-height:13px">10</div>
<div class="tx" style="left:196px;width:60px;text-align:center;top:771px;font-size:12px;line-height:13px">20</div>
<div class="tx" style="left:282px;width:60px;text-align:center;top:771px;font-size:12px;line-height:13px">30</div>
<div class="tx" style="left:368px;width:60px;text-align:center;top:771px;font-size:12px;line-height:13px">40</div>
<div class="tx" style="left:454px;width:60px;text-align:center;top:771px;font-size:12px;line-height:13px">50</div>
<div class="tx" style="left:540px;width:60px;text-align:center;top:771px;font-size:12px;line-height:13px">60</div>
<div class="tx" style="left:626px;width:60px;text-align:center;top:771px;font-size:12px;line-height:13px">70</div>
<div class="tx" style="left:712px;width:60px;text-align:center;top:771px;font-size:12px;line-height:13px">80</div>
<div class="tx" style="left:798px;width:60px;text-align:center;top:771px;font-size:12px;line-height:13px">90</div>
<div class="tx" style="left:884px;width:60px;text-align:center;top:771px;font-size:12px;line-height:13px">100</div>
<div class="a" style="left:50px;top:759px;width:9px;height:25px;background:#8eb2d6;border:1px solid #607080"></div>
<div class="a" style="left:54px;top:760px;width:1px;height:14px;background:#4a6a80;opacity:0.6"></div>
<div class="tx" style="left:50px;width:9px;text-align:center;top:770px;font-size:12px;line-height:13px;color:#062030;-webkit-text-stroke:0.3px #062030">0</div>
<!-- STATUS -->
<div class="a" style="left:2px;top:787px;width:96px;height:21px;background:#dcc8c8;border-top:2px solid #8a8a78;border-left:2px solid #8a8a78;border-bottom:1px solid #fcfcf8;border-right:1px solid #fcfcf8"></div>
<div class="a" style="left:2px;top:810px;width:96px;height:22px;background:#fff;border-top:2px solid #8a8a78;border-left:2px solid #8a8a78;border-right:1px solid #fcfcf8"></div>
<div class="a" style="left:103px;top:784px;width:1px;height:48px;background:#808080"></div>
<div class="a" style="left:104px;top:784px;width:1px;height:48px;background:#f0f0f0"></div>
<div class="sunk" style="left:107px;top:788px;width:200px;height:21px"></div>
<div class="tx" style="left:113px;top:793px">None Selected</div>
<div class="sunk" style="left:107px;top:813px;width:500px;height:20px"></div>
<div class="tx" style="left:113px;top:817px;letter-spacing:-0.12px">Click and drag to select and move objects</div>
<svg style="left:315px;top:791px" width="10" height="13" viewBox="0 0 10 13"><path d="M2.5 6V3.5A2.5 2.5 0 0 1 7.5 3.5V6" stroke="#000" stroke-width="1.6" fill="none"/><rect x="1" y="6" width="8" height="6" fill="#000"/><path d="M1 8H9M1 10H9" stroke="#c8c8c8" stroke-width="0.8"/></svg>
<svg style="left:340px;top:790px" width="15" height="15" viewBox="0 0 15 15"><rect x="0.5" y="0.5" width="14" height="14" fill="none" stroke="#000" stroke-width="1.1"/><path d="M7.5 1V14M1 7.5H14" stroke="#000" stroke-width="0.9"/><circle cx="7.5" cy="7.5" r="3" fill="#c8c8c8" stroke="#000" stroke-width="1"/><circle cx="7.5" cy="7.5" r="1.1" fill="#000"/></svg>
<div class="tx" style="left:362px;top:793px;font-size:12px">X:</div>
<div class="fld" style="left:373px;top:789px;width:57px;height:19px"><div class="tx" style="left:1px;top:2px;color:#808080">-77.243</div></div>
<div class="tx" style="left:444px;top:793px;font-size:12px">Y:</div>
<div class="fld" style="left:456px;top:789px;width:56px;height:19px"><div class="tx" style="left:1px;top:2px;color:#808080">-77.823</div></div>
<div class="tx" style="left:526px;top:793px;font-size:12px">Z:</div>
<div class="fld" style="left:537px;top:789px;width:57px;height:19px"><div class="tx" style="left:1px;top:2px;color:#808080">0.0</div></div>
<div class="sunk" style="left:609px;top:788px;width:100px;height:21px"></div>
<div class="tx" style="left:615px;top:793px;letter-spacing:-0.15px">Grid = 10.0</div>
<div class="sunk" style="left:609px;top:813px;width:100px;height:20px"></div>
<div class="tx" style="left:615px;top:817px">Add Time Tag</div>
<div class="rais" style="left:710px;top:787px;width:45px;height:45px"></div>
<svg style="left:721px;top:802px" width="24" height="12" viewBox="0 0 24 12"><ellipse cx="4.8" cy="5.5" rx="3.6" ry="3.8" fill="none" stroke="#000" stroke-width="2"/><path d="M8 5.5H22.5M15.5 5.5V9.5M18.5 5.5V8.5M21.5 5.5V9.5" stroke="#000" stroke-width="2.2"/></svg>
<div class="rais" style="left:757px;top:787px;width:48px;height:21px"></div>
<div class="tx" style="left:760px;top:792px">Auto Key</div>
<div class="rais" style="left:757px;top:809px;width:48px;height:23px"></div>
<div class="tx" style="left:763px;top:814px">Set Key</div>
<div class="dd" style="left:808px;top:788px;width:115px;height:20px;border-bottom-color:#dedede;border-right-color:#dedede"><div class="tx" style="left:2px;top:2px">Selected</div><div class="ddb" style="left:95px;top:0px;width:16px;height:16px"><i></i></div></div>
<div class="rais" style="left:808px;top:810px;width:115px;height:22px"></div>
<div class="tx" style="left:838px;top:815px;letter-spacing:-0.2px">Key Filters...</div>
<!-- PLAYBACK -->
<svg style="left:932px;top:793px" width="17" height="9" viewBox="0 0 17 9"><path d="M0 0H2.5V9H0Z M9 0V9L2.5 4.5Z M16 0V9L9.5 4.5Z" fill="#000"/></svg>
<div class="sep" style="left:953px;top:790px;height:16px"></div>
<svg style="left:960px;top:793px" width="13" height="9" viewBox="0 0 13 9"><path d="M6 0V9L0 4.5Z M7 0H9V9H7Z M10.5 0H12.5V9H10.5Z" fill="#000"/></svg>
<div class="a" style="left:981px;top:790px;width:16px;height:15px;border:2px solid #000"></div>
<svg style="left:986px;top:794px" width="7" height="8" viewBox="0 0 7 8"><path d="M0 0V8L6.5 4Z" fill="#000"/></svg>
<div class="fly" style="left:996px;top:804px;border-bottom-color:#000"></div>
<svg style="left:1005px;top:793px" width="13" height="9" viewBox="0 0 13 9"><path d="M0 0H2V9H0Z M3.5 0H5.5V9H3.5Z M7 0V9L13 4.5Z" fill="#000"/></svg>
<div class="sep" style="left:1025px;top:790px;height:16px"></div>
<svg style="left:1030px;top:793px" width="17" height="9" viewBox="0 0 17 9"><path d="M0 0V9L6.5 4.5Z M7 0V9L13.5 4.5Z M14 0H16.5V9H14Z" fill="#000"/></svg>
<div class="sep" style="left:1054px;top:790px;height:16px"></div>
<svg style="left:935px;top:815px" width="11" height="8" viewBox="0 0 11 8"><path d="M0 0H1.5V8H0Z M9.5 0H11V8H9.5Z M1.5 4L5 0.5V7.5Z M9.5 4L6 0.5V7.5Z" fill="#000"/></svg>
<div class="sep" style="left:953px;top:812px;height:20px"></div>
<div class="fld" style="left:956px;top:811px;width:62px;height:19px"><div class="tx" style="left:1px;top:2px;font-size:12px">0</div></div>
<div class="a" style="left:1020px;top:812px;width:10px;height:16px;border-right:1px solid #707070;border-bottom:1px solid #707070"></div>
<svg style="left:1021px;top:814px" width="8" height="13" viewBox="0 0 8 13"><path d="M0.5 4.5L4 1L7.5 4.5Z M0.5 8.5L4 12L7.5 8.5Z" fill="#000"/></svg>
<svg style="left:1036px;top:812px" width="14" height="13" viewBox="0 0 14 13"><rect x="0.5" y="0.5" width="10" height="10" fill="#e8e8e8" stroke="#000"/><path d="M0.5 2.5H10.5" stroke="#000" stroke-width="1.5"/><circle cx="9.5" cy="8.5" r="3.6" fill="#e8e8e8" stroke="#c02020" stroke-width="1"/><path d="M9.5 6V10M8 9L9.5 10.5L11 9" stroke="#000" stroke-width="0.9" fill="none"/></svg>
<div class="sep" style="left:1054px;top:812px;height:16px"></div>
<!-- VIEWPORT NAV -->
<svg style="left:1059px;top:790px" width="16" height="16" viewBox="0 0 16 16"><circle cx="6" cy="6" r="5" fill="#d8d8d8" stroke="#000" stroke-width="1"/><circle cx="6" cy="6" r="5.3" fill="none" stroke="#2020a0" stroke-width="0.6"/><path d="M9.5 9.5L14.5 14.5" stroke="#0000c0" stroke-width="2.2"/></svg>
<svg style="left:1081px;top:790px" width="18" height="16" viewBox="0 0 18 16"><rect x="3" y="0.5" width="14" height="10" fill="#d0d0d0" stroke="#901818"/><path d="M10 0.5V10.5M3 5.5H17" stroke="#901818"/><circle cx="4.5" cy="9.5" r="3.6" fill="#d0d0d0" stroke="#000" stroke-width="1"/><path d="M7 12L9.5 14.5" stroke="#0000c0" stroke-width="2"/></svg>
<svg style="left:1105px;top:790px" width="17" height="16" viewBox="0 0 17 16"><path d="M0.5 3V0.5H3M13 0.5H15.5V3M0.5 12V14.5H3M13 14.5H15.5V12" stroke="#000" fill="none"/><rect x="2.5" y="4.5" width="8" height="8" fill="#c8c8c8" stroke="#18188a"/><path d="M2.5 4.5L5 2H13V10L10.5 12.5" fill="#a0a0a0" stroke="#18188a"/><path d="M5 2H13L10.5 4.5H2.5Z" fill="#f0f0f0" stroke="#18188a"/></svg>
<div class="fly" style="left:1119px;top:802px"></div>
<svg style="left:1128px;top:790px" width="17" height="16" viewBox="0 0 17 16"><rect x="3.5" y="0.5" width="13" height="10" fill="#d0d0d0" stroke="#901818"/><path d="M10 0.5V10.5M3.5 5.5H16.5" stroke="#901818"/><rect x="0.5" y="6.5" width="7" height="8" fill="#c8c8c8" stroke="#18188a"/><path d="M0.5 6.5L2.5 4.5H9.5V12.5L7.5 14.5" fill="none" stroke="#18188a"/></svg>
<div class="fly" style="left:1142px;top:802px"></div>
<div class="sep" style="left:1054px;top:812px;height:16px"></div>
<svg style="left:1059px;top:812px" width="17" height="15" viewBox="0 0 17 15"><path d="M0.5 0.5L16 7.5L0.5 14.5Z" fill="#e0e0e0" stroke="#000" stroke-width="1.2"/><path d="M0.5 0.5L6 3V12L0.5 14.5Z" fill="#9a9a9a"/><circle cx="8" cy="7.5" r="2.5" fill="#d8d8d8" stroke="#000" stroke-width="0.8"/></svg>
<div class="fly" style="left:1074px;top:824px"></div>
<svg style="left:1082px;top:812px" width="16" height="15" viewBox="0 0 16 15"><path d="M1 8L4 10.5V4.5Q5 2.5 6 4V2Q7 0.5 8 2V1.5Q9.5 0 10.5 2V3Q12 1.5 12.5 3.5V9Q12 13 9 14.5H5Q3 12.5 1 10Z" fill="#e8e8e8" stroke="#000" stroke-width="1"/><path d="M6 4V8M8 2V8M10.5 2V8" stroke="#000" stroke-width="0.8"/></svg>
<div class="fly" style="left:1097px;top:824px"></div>
<svg style="left:1105px;top:812px" width="17" height="15" viewBox="0 0 17 15"><ellipse cx="8" cy="8" rx="5" ry="5" fill="none" stroke="#000" stroke-width="1"/><path d="M8 8V1M6.5 2.5L8 0.5L9.5 2.5" stroke="#000" stroke-width="1" fill="none"/><path d="M8 8H15.5M14 6.5L16 8L14 9.5" stroke="#000" stroke-width="1" fill="none"/><path d="M8 8L1.5 13.5" stroke="#1818a0" stroke-width="1.2"/><path d="M1 14.5L1.5 11.5M1 14.5L4 14" stroke="#000" stroke-width="1"/></svg>
<div class="fly" style="left:1120px;top:824px"></div>
<svg style="left:1128px;top:812px" width="16" height="15" viewBox="0 0 16 15"><rect x="7.5" y="7.5" width="8" height="7" fill="none" stroke="#000" stroke-width="1.2"/><rect x="0.5" y="0.5" width="12" height="10" fill="#c8c8c8" stroke="#18188a" stroke-width="1.2"/><path d="M3 3L9 8.5M3 3V5.5M3 3H5.5" stroke="#000" stroke-width="1" fill="none" stroke-dasharray="1.5 1"/></svg>
</body></html>
